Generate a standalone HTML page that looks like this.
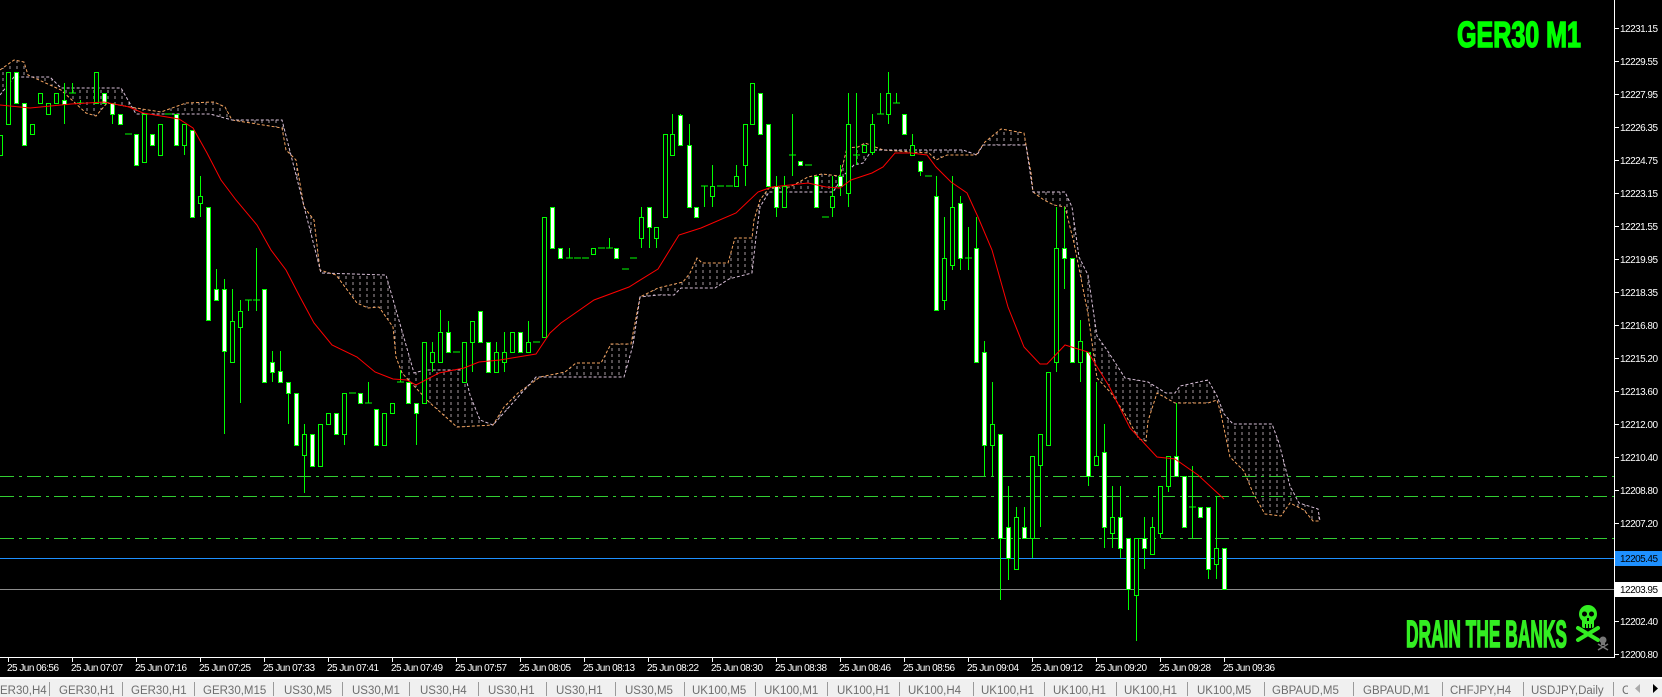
<!DOCTYPE html>
<html><head><meta charset="utf-8">
<style>
html,body{margin:0;padding:0;background:#000;width:1662px;height:697px;overflow:hidden}
svg{display:block}
.ax{font-family:"Liberation Sans",sans-serif;font-size:10px;fill:#fff}
.tab{font-family:"Liberation Sans",sans-serif;font-size:11.5px;fill:#6d6d6d}
</style></head><body>
<svg width="1662" height="697" viewBox="0 0 1662 697" xmlns="http://www.w3.org/2000/svg">
<defs>
<pattern id="hatch" width="7" height="6" patternUnits="userSpaceOnUse">
<line x1="3" y1="0" x2="3" y2="3" stroke="#cfc0c8" stroke-width="1"/>
</pattern>
<clipPath id="cc"><rect x="0" y="0" width="1614" height="657"/></clipPath>
</defs>
<rect width="1662" height="697" fill="#000"/>
<g clip-path="url(#cc)">
<polygon fill="url(#hatch)" opacity="0.8" points="0,70 14,60 24,62 28,75 61,90 86,113 96,116 107,103 136,108 161,112 186,103 214,102 225,107 232,120 282,128 286,150 296,160 304,207 314,220 320,270 336,275 357,303 368,308 379,307 393,327 396,357 402,373 429,402 457,427 493,425 504,407 518,393 532,383 540,377 565,372 576,363 601,363 611,344 631,344 640,297 658,288 683,282 690,273 697,258 702,263 728,263 735,238 752,238 754,220 760,200 769,188 790,187 808,177 822,174 840,176 847,148 858,147 865,143 883,150 911,152 929,153 936,160 947,155 976,155 985,142 1001,129 1024,133 1026,145 1031,173 1033,192 1044,200 1054,205 1065,207 1074,243 1088,314 1097,378 1111,393 1125,414 1139,439 1146,441 1148,421 1157,393 1175,403 1208,403 1217,400 1221,414 1230,457 1244,471 1253,493 1265,514 1281,516 1290,503 1304,510 1313,521 1320,521 1318,509 1299,503 1290,486 1279,443 1272,424 1233,424 1224,414 1217,396 1208,380 1180,386 1175,393 1166,393 1148,382 1125,378 1107,350 1097,336 1088,275 1079,257 1072,207 1065,192 1033,192 1026,145 983,145 977,155 963,150 872,150 863,163 854,165 844,175 833,192 769,192 760,207 756,237 752,273 729,279 715,288 681,288 674,295 658,295 640,297 633,345 624,377 540,377 536,377 493,425 480,420 470,395 464,370 425,370 414,373 386,275 321,273 282,120 232,120 210,114 136,114 121,88 61,88 50,77 14,77 0,95"/>
<polyline fill="none" stroke="#f4a460" stroke-width="1" stroke-dasharray="3,2" points="0,70 14,60 24,62 28,75 61,90 86,113 96,116 107,103 136,108 161,112 186,103 214,102 225,107 232,120 282,128 286,150 296,160 304,207 314,220 320,270 336,275 357,303 368,308 379,307 393,327 396,357 402,373 429,402 457,427 493,425 504,407 518,393 532,383 540,377 565,372 576,363 601,363 611,344 631,344 640,297 658,288 683,282 690,273 697,258 702,263 728,263 735,238 752,238 754,220 760,200 769,188 790,187 808,177 822,174 840,176 847,148 858,147 865,143 883,150 911,152 929,153 936,160 947,155 976,155 985,142 1001,129 1024,133 1026,145 1031,173 1033,192 1044,200 1054,205 1065,207 1074,243 1088,314 1097,378 1111,393 1125,414 1139,439 1146,441 1148,421 1157,393 1175,403 1208,403 1217,400 1221,414 1230,457 1244,471 1253,493 1265,514 1281,516 1290,503 1304,510 1313,521 1320,521"/>
<polyline fill="none" stroke="#d8bfd8" stroke-width="1" stroke-dasharray="3,2" points="0,95 14,77 50,77 61,88 121,88 136,114 210,114 232,120 282,120 321,273 386,275 414,373 425,370 464,370 470,395 480,420 493,425 536,377 540,377 624,377 633,345 640,297 658,295 674,295 681,288 715,288 729,279 752,273 756,237 760,207 769,192 833,192 844,175 854,165 863,163 872,150 963,150 977,155 983,145 1026,145 1033,192 1065,192 1072,207 1079,257 1088,275 1097,336 1107,350 1125,378 1148,382 1166,393 1175,393 1180,386 1208,380 1217,396 1224,414 1233,424 1272,424 1279,443 1290,486 1299,503 1318,509 1320,521"/>
<g stroke="#32cd32" stroke-width="1" stroke-dasharray="14,5,3,5">
<line x1="0" y1="476.5" x2="1614" y2="476.5"/>
<line x1="0" y1="496.5" x2="1614" y2="496.5"/>
<line x1="0" y1="538.5" x2="1614" y2="538.5"/>
</g>
<line x1="0" y1="558.5" x2="1614" y2="558.5" stroke="#1e90ff"/>
<line x1="0" y1="589.5" x2="1614" y2="589.5" stroke="#8c8c8c"/>
<path stroke="#00ff00" stroke-width="1" fill="none" d="
M0.5 135V155M8.5 72V124M16.5 72V103M24.5 103V145M32.5 124V134M40.5 93V103M48.5 103V114M56.5 93V103M64.5 83V124M72.5 83V93M80.5 100V103M96.5 72V103M104.5 93V103M112.5 103V124M120.5 114V124M136.5 134V165M144.5 114V162M152.5 134V145M160.5 124V155M176.5 114V145M184.5 124V155M192.5 130V217M200.5 176V217M208.5 207V320M216.5 269V300M224.5 279V434M232.5 289V362M240.5 300V403M248.5 300V311M256.5 248V311M264.5 289V382M272.5 351V382M280.5 351V382M288.5 382V424M296.5 393V445M304.5 424V493M312.5 434V466M320.5 424V466M328.5 413V424M336.5 413V434M344.5 393V445M360.5 393V403M368.5 382V403M376.5 409V445M384.5 413V445M392.5 403V413M400.5 370V382M408.5 382V403M416.5 403V445M424.5 342V403M432.5 342V372M440.5 310V362M448.5 321V352M464.5 342V382M472.5 321V372M480.5 311V342M488.5 342V372M496.5 342V372M504.5 332V372M512.5 332V352M520.5 332V352M528.5 321V352M544.5 217V337M552.5 207V248M560.5 248V258M569.5 248V258M593.5 248V254M609.5 238V248M616.5 248V258M641.5 207V248M649.5 207V248M656.5 227V248M665.5 134V217M672.5 114V155M680.5 114V145M689.5 124V207M696.5 207V217M704.5 186V207M712.5 165V207M736.5 165V186M745.5 124V186M752.5 83V124M760.5 93V134M768.5 124V186M776.5 176V217M784.5 176V207M792.5 114V176M800.5 162V165M816.5 176V207M832.5 176V217M840.5 165V196M848.5 93V207M856.5 93V165M864.5 145V152M872.5 114V155M880.5 93V114M888.5 72V124M896.5 93V103M904.5 114V134M912.5 134V155M920.5 161V176M936.5 176V310M944.5 217V310M952.5 176V270M960.5 196V270M968.5 227V270M976.5 217V362M984.5 341V476M992.5 382V476M1000.5 434V600M1008.5 486V580M1016.5 507V569M1024.5 507V538M1032.5 456V558M1040.5 434V527M1048.5 372V445M1056.5 207V372M1064.5 207V289M1072.5 258V362M1080.5 320V382M1088.5 352V486M1096.5 382V465M1104.5 424V548M1112.5 486V548M1120.5 486V558M1128.5 538V610M1136.5 538V641M1144.5 517V569M1152.5 517V554M1160.5 486V538M1168.5 456V492M1176.5 403V476M1184.5 476V527M1192.5 466V538M1200.5 507V517M1208.5 507V579M1216.5 496V579M1224.5 548V589
M69 93H76M77 103H84M125 134H132M165 114H172M245 300H252M253 300H260M349 393H356M365 403H372M397 382H404M453 352H460M533 342H540M566 258H573M574 258H581M582 258H589M598 248H605M606 248H613M622 269H629M630 258H637M701 186H708M717 186H724M726 186H733M789 155H796M805 165H812M822 217H829M853 155H860M877 114H884M893 103H900M925 176H932M965 258H972M1189 507H1196"/>
<g fill="#000" stroke="#00ff00" stroke-width="1">
<rect x="-1.5" y="135.5" width="4" height="20"/><rect x="6.5" y="72.5" width="4" height="52"/><rect x="30.5" y="124.5" width="4" height="10"/><rect x="38.5" y="93.5" width="4" height="10"/><rect x="46.5" y="103.5" width="4" height="11"/><rect x="54.5" y="93.5" width="4" height="10"/><rect x="94.5" y="72.5" width="4" height="31"/><rect x="142.5" y="114.5" width="4" height="48"/><rect x="158.5" y="124.5" width="4" height="31"/><rect x="182.5" y="124.5" width="4" height="21"/><rect x="198.5" y="196.5" width="4" height="7"/><rect x="230.5" y="321.5" width="4" height="41"/><rect x="238.5" y="311.5" width="4" height="16"/><rect x="302.5" y="434.5" width="4" height="21"/><rect x="318.5" y="424.5" width="4" height="42"/><rect x="326.5" y="413.5" width="4" height="11"/><rect x="342.5" y="393.5" width="4" height="41"/><rect x="382.5" y="413.5" width="4" height="32"/><rect x="390.5" y="403.5" width="4" height="10"/><rect x="422.5" y="342.5" width="4" height="61"/><rect x="430.5" y="352.5" width="4" height="10"/><rect x="438.5" y="332.5" width="4" height="30"/><rect x="462.5" y="342.5" width="4" height="40"/><rect x="470.5" y="321.5" width="4" height="21"/><rect x="494.5" y="352.5" width="4" height="20"/><rect x="502.5" y="352.5" width="4" height="10"/><rect x="510.5" y="332.5" width="4" height="20"/><rect x="526.5" y="342.5" width="4" height="10"/><rect x="542.5" y="217.5" width="4" height="120"/><rect x="591.5" y="248.5" width="4" height="6"/><rect x="639.5" y="217.5" width="4" height="21"/><rect x="654.5" y="227.5" width="4" height="11"/><rect x="663.5" y="134.5" width="4" height="83"/><rect x="670.5" y="134.5" width="4" height="21"/><rect x="710.5" y="186.5" width="4" height="10"/><rect x="734.5" y="176.5" width="4" height="10"/><rect x="743.5" y="124.5" width="4" height="41"/><rect x="750.5" y="83.5" width="4" height="41"/><rect x="782.5" y="186.5" width="4" height="21"/><rect x="830.5" y="196.5" width="4" height="11"/><rect x="846.5" y="124.5" width="4" height="69"/><rect x="862.5" y="145.5" width="4" height="7"/><rect x="870.5" y="124.5" width="4" height="28"/><rect x="886.5" y="93.5" width="4" height="21"/><rect x="910.5" y="145.5" width="4" height="10"/><rect x="942.5" y="258.5" width="4" height="42"/><rect x="950.5" y="207.5" width="4" height="58"/><rect x="990.5" y="424.5" width="4" height="21"/><rect x="1014.5" y="517.5" width="4" height="52"/><rect x="1030.5" y="456.5" width="4" height="82"/><rect x="1038.5" y="434.5" width="4" height="31"/><rect x="1046.5" y="372.5" width="4" height="73"/><rect x="1054.5" y="248.5" width="4" height="114"/><rect x="1078.5" y="341.5" width="4" height="21"/><rect x="1094.5" y="456.5" width="4" height="9"/><rect x="1110.5" y="517.5" width="4" height="16"/><rect x="1134.5" y="538.5" width="4" height="57"/><rect x="1150.5" y="527.5" width="4" height="27"/><rect x="1158.5" y="486.5" width="4" height="47"/><rect x="1166.5" y="456.5" width="4" height="30"/><rect x="1214.5" y="548.5" width="4" height="16"/>
</g>
<g fill="#fff" stroke="#00ff00" stroke-width="1">
<rect x="14.5" y="72.5" width="4" height="31"/><rect x="22.5" y="103.5" width="4" height="42"/><rect x="62.5" y="100.5" width="4" height="4"/><rect x="102.5" y="93.5" width="4" height="10"/><rect x="110.5" y="103.5" width="4" height="11"/><rect x="118.5" y="114.5" width="4" height="10"/><rect x="134.5" y="134.5" width="4" height="31"/><rect x="150.5" y="134.5" width="4" height="11"/><rect x="174.5" y="114.5" width="4" height="31"/><rect x="190.5" y="130.5" width="4" height="87"/><rect x="206.5" y="207.5" width="4" height="113"/><rect x="214.5" y="289.5" width="4" height="11"/><rect x="222.5" y="289.5" width="4" height="62"/><rect x="262.5" y="289.5" width="4" height="93"/><rect x="270.5" y="362.5" width="4" height="10"/><rect x="278.5" y="371.5" width="4" height="11"/><rect x="286.5" y="382.5" width="4" height="11"/><rect x="294.5" y="393.5" width="4" height="52"/><rect x="310.5" y="434.5" width="4" height="32"/><rect x="334.5" y="413.5" width="4" height="21"/><rect x="358.5" y="393.5" width="4" height="10"/><rect x="374.5" y="409.5" width="4" height="36"/><rect x="406.5" y="382.5" width="4" height="21"/><rect x="414.5" y="403.5" width="4" height="10"/><rect x="446.5" y="332.5" width="4" height="20"/><rect x="478.5" y="311.5" width="4" height="31"/><rect x="486.5" y="342.5" width="4" height="30"/><rect x="518.5" y="332.5" width="4" height="20"/><rect x="550.5" y="207.5" width="4" height="41"/><rect x="558.5" y="248.5" width="4" height="10"/><rect x="614.5" y="248.5" width="4" height="10"/><rect x="647.5" y="207.5" width="4" height="20"/><rect x="678.5" y="115.5" width="4" height="30"/><rect x="687.5" y="145.5" width="4" height="62"/><rect x="694.5" y="207.5" width="4" height="10"/><rect x="758.5" y="93.5" width="4" height="41"/><rect x="766.5" y="124.5" width="4" height="62"/><rect x="774.5" y="186.5" width="4" height="21"/><rect x="798.5" y="161.5" width="4" height="4"/><rect x="814.5" y="176.5" width="4" height="31"/><rect x="838.5" y="176.5" width="4" height="10"/><rect x="902.5" y="114.5" width="4" height="20"/><rect x="918.5" y="161.5" width="4" height="10"/><rect x="934.5" y="196.5" width="4" height="114"/><rect x="958.5" y="203.5" width="4" height="55"/><rect x="974.5" y="248.5" width="4" height="114"/><rect x="982.5" y="352.5" width="4" height="93"/><rect x="998.5" y="434.5" width="4" height="104"/><rect x="1006.5" y="527.5" width="4" height="31"/><rect x="1022.5" y="527.5" width="4" height="11"/><rect x="1062.5" y="248.5" width="4" height="10"/><rect x="1070.5" y="258.5" width="4" height="104"/><rect x="1086.5" y="352.5" width="4" height="124"/><rect x="1102.5" y="452.5" width="4" height="75"/><rect x="1118.5" y="517.5" width="4" height="31"/><rect x="1126.5" y="538.5" width="4" height="51"/><rect x="1142.5" y="538.5" width="4" height="10"/><rect x="1174.5" y="456.5" width="4" height="20"/><rect x="1182.5" y="476.5" width="4" height="51"/><rect x="1198.5" y="507.5" width="4" height="10"/><rect x="1206.5" y="507.5" width="4" height="62"/><rect x="1222.5" y="548.5" width="4" height="41"/>
</g>
<polyline fill="none" stroke="#ff0000" stroke-width="1" points="0,105 30,108 71,104 104,102 129,107 143,113 179,119 193,128 207,153 221,180 236,200 257,225 271,250 286,270 300,297 314,323 332,345 357,357 375,372 393,379 407,380 416,385 439,373 464,368 479,362 500,360 536,354 550,333 561,323 594,300 629,287 658,269 679,235 701,228 736,213 758,192 772,187 808,183 826,187 840,188 851,180 872,173 883,167 895,153 911,153 927,155 936,167 951,182 967,193 978,217 992,250 1008,307 1024,347 1040,364 1047,364 1065,345 1088,352 1109,386 1130,428 1157,457 1175,459 1198,475 1224,499"/>
</g>
<text x="1457" y="47" textLength="124" lengthAdjust="spacingAndGlyphs" font-family="Liberation Sans Narrow, Liberation Sans, sans-serif" font-weight="bold" font-size="36" fill="#00ff00" stroke="#00ff00" stroke-width="1.6">GER30 M1</text>
<text x="1406" y="647" textLength="161" lengthAdjust="spacingAndGlyphs" font-family="Liberation Sans Narrow, Liberation Sans, sans-serif" font-weight="bold" font-size="38" fill="#33ee22" stroke="#33ee22" stroke-width="1.6">DRAIN THE BANKS</text>
<g fill="#33ee22">
<ellipse cx="1588" cy="614" rx="9" ry="9"/>
<rect x="1582" y="619" width="12" height="9" rx="2"/>
</g>
<g fill="#000"><circle cx="1584.5" cy="614" r="2.5"/><circle cx="1591.5" cy="614" r="2.5"/><rect x="1587" y="618" width="2" height="3"/><rect x="1585" y="624" width="1" height="4"/><rect x="1588" y="624" width="1" height="4"/><rect x="1591" y="624" width="1" height="4"/></g>
<g stroke="#33ee22" stroke-width="4" stroke-linecap="round"><line x1="1578" y1="628" x2="1598" y2="640"/><line x1="1598" y1="628" x2="1578" y2="640"/></g>
<g fill="#777"><circle cx="1603" cy="640" r="3.5"/><rect x="1601" y="642" width="4" height="3"/></g>
<g stroke="#777" stroke-width="1.5"><line x1="1598" y1="644" x2="1608" y2="650"/><line x1="1608" y1="644" x2="1598" y2="650"/></g>
<line x1="1614.5" y1="0" x2="1614.5" y2="658" stroke="#fff"/>
<line x1="0" y1="657.5" x2="1615" y2="657.5" stroke="#fff"/>
<g stroke="#fff"><path d="M1615 28.5h4M1615 61.5h4M1615 94.5h4M1615 127.5h4M1615 160.5h4M1615 193.5h4M1615 226.5h4M1615 259.5h4M1615 292.5h4M1615 325.5h4M1615 358.5h4M1615 391.5h4M1615 424.5h4M1615 457.5h4M1615 490.5h4M1615 523.5h4M1615 621.5h4M1615 654.5h4"/>
<path d="M8.5 657v5M72.5 657v5M136.5 657v5M200.5 657v5M264.5 657v5M328.5 657v5M392.5 657v5M456.5 657v5M520.5 657v5M584.5 657v5M648.5 657v5M712.5 657v5M776.5 657v5M840.5 657v5M904.5 657v5M968.5 657v5M1032.5 657v5M1096.5 657v5M1160.5 657v5M1224.5 657v5"/></g>
<g class="ax">
<text x="1620" y="32" textLength="38">12231.15</text><text x="1620" y="65" textLength="38">12229.55</text><text x="1620" y="98" textLength="38">12227.95</text><text x="1620" y="131" textLength="38">12226.35</text><text x="1620" y="164" textLength="38">12224.75</text><text x="1620" y="197" textLength="38">12223.15</text><text x="1620" y="230" textLength="38">12221.55</text><text x="1620" y="263" textLength="38">12219.95</text><text x="1620" y="296" textLength="38">12218.35</text><text x="1620" y="329" textLength="38">12216.80</text><text x="1620" y="362" textLength="38">12215.20</text><text x="1620" y="395" textLength="38">12213.60</text><text x="1620" y="428" textLength="38">12212.00</text><text x="1620" y="461" textLength="38">12210.40</text><text x="1620" y="494" textLength="38">12208.80</text><text x="1620" y="527" textLength="38">12207.20</text><text x="1620" y="625" textLength="38">12202.40</text><text x="1620" y="658" textLength="38">12200.80</text>
</g>
<rect x="1615" y="551" width="47" height="15" fill="#1e90ff"/>
<text x="1620" y="562" class="ax" textLength="38" style="fill:#000">12205.45</text>
<rect x="1615" y="582" width="47" height="15" fill="#fff"/>
<text x="1620" y="593" class="ax" textLength="38" style="fill:#000">12203.95</text>
<g class="ax">
<text x="7" y="671" textLength="52">25 Jun 06:56</text><text x="71" y="671" textLength="52">25 Jun 07:07</text><text x="135" y="671" textLength="52">25 Jun 07:16</text><text x="199" y="671" textLength="52">25 Jun 07:25</text><text x="263" y="671" textLength="52">25 Jun 07:33</text><text x="327" y="671" textLength="52">25 Jun 07:41</text><text x="391" y="671" textLength="52">25 Jun 07:49</text><text x="455" y="671" textLength="52">25 Jun 07:57</text><text x="519" y="671" textLength="52">25 Jun 08:05</text><text x="583" y="671" textLength="52">25 Jun 08:13</text><text x="647" y="671" textLength="52">25 Jun 08:22</text><text x="711" y="671" textLength="52">25 Jun 08:30</text><text x="775" y="671" textLength="52">25 Jun 08:38</text><text x="839" y="671" textLength="52">25 Jun 08:46</text><text x="903" y="671" textLength="52">25 Jun 08:56</text><text x="967" y="671" textLength="52">25 Jun 09:04</text><text x="1031" y="671" textLength="52">25 Jun 09:12</text><text x="1095" y="671" textLength="52">25 Jun 09:20</text><text x="1159" y="671" textLength="52">25 Jun 09:28</text><text x="1223" y="671" textLength="52">25 Jun 09:36</text>
</g>
<rect x="0" y="677" width="1662" height="2" fill="#fff"/>
<rect x="0" y="679" width="1662" height="18" fill="#f0f0f0"/>
<g stroke="#9a9a9a"><path d="M49.5 682v14M122.5 682v14M194.5 682v14M273.5 682v14M342.5 682v14M409.5 682v14M478.5 682v14M546.5 682v14M615.5 682v14M684.5 682v14M755.5 682v14M827.5 682v14M899.5 682v14M973.5 682v14M1044.5 682v14M1116.5 682v14M1187.5 682v14M1264.5 682v14M1353.5 682v14M1442.5 682v14M1523.5 682v14M1613.5 682v14"/></g>
<g class="tab">
<text x="0" y="694">ER30,H4</text><text x="59" y="694">GER30,H1</text><text x="131" y="694">GER30,H1</text><text x="203" y="694">GER30,M15</text><text x="284" y="694">US30,M5</text><text x="352" y="694">US30,M1</text><text x="420" y="694">US30,H4</text><text x="488" y="694">US30,H1</text><text x="556" y="694">US30,H1</text><text x="625" y="694">US30,M5</text><text x="692" y="694">UK100,M5</text><text x="764" y="694">UK100,M1</text><text x="837" y="694">UK100,H1</text><text x="908" y="694">UK100,H4</text><text x="981" y="694">UK100,H1</text><text x="1053" y="694">UK100,H1</text><text x="1124" y="694">UK100,H1</text><text x="1197" y="694">UK100,M5</text><text x="1272" y="694">GBPAUD,M5</text><text x="1363" y="694">GBPAUD,M1</text><text x="1450" y="694">CHFJPY,H4</text><text x="1531" y="694">USDJPY,Daily</text><text x="1622" y="694">C</text>
</g>
<rect x="1628" y="680" width="34" height="17" fill="#f0f0f0"/>
<path d="M1640 684l-5 4.5 5 4.5z" fill="#aaa"/>
<path d="M1653 684l5 4.5-5 4.5z" fill="#000"/>
</svg>
</body></html>
